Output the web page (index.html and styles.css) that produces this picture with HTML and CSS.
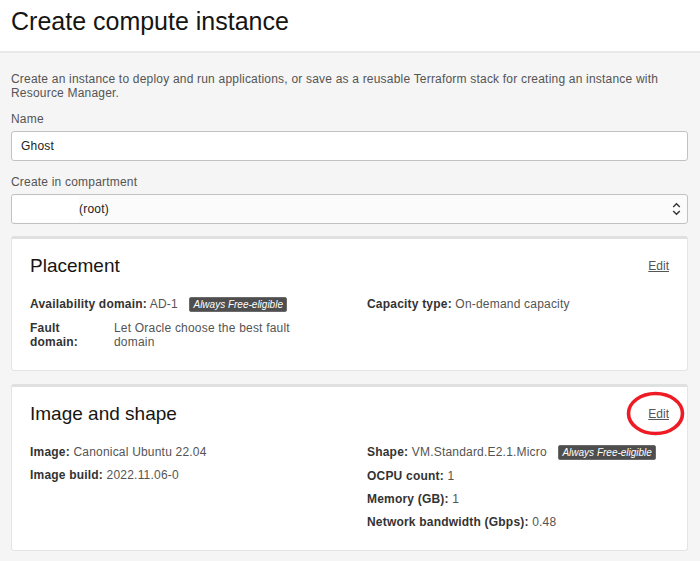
FILE: index.html
```html
<!DOCTYPE html>
<html lang="en">
<head>
<meta charset="utf-8">
<title>Create compute instance</title>
<link rel="stylesheet" href="styles.css">
</head>
<body>
<header class="page-header">
  <h1 class="page-title">Create compute instance</h1>
</header>
<main class="page-body">
  <p class="intro">Create an instance to deploy and run applications, or save as a reusable Terraform stack for creating an instance with Resource Manager.</p>

  <div class="field">
    <label class="field-label">Name</label>
    <div class="text-input">Ghost</div>
  </div>

  <div class="field last">
    <label class="field-label">Create in compartment</label>
    <div class="select-input">
      <span class="select-value"><span class="redacted"></span>(root)</span>
      <svg class="select-arrows" width="9" height="14" viewBox="0 0 9 14" aria-hidden="true">
        <polyline points="1.2,5 4.5,1.7 7.8,5" fill="none" stroke="#333" stroke-width="1.4"/>
        <polyline points="1.2,9 4.5,12.3 7.8,9" fill="none" stroke="#333" stroke-width="1.4"/>
      </svg>
    </div>
  </div>

  <section class="card">
    <div class="card-head">
      <h2 class="card-title">Placement</h2>
      <a class="edit-link">Edit</a>
    </div>
    <div class="card-grid">
      <div class="col">
        <div class="row"><b class="k">Availability domain:</b> AD-1 <span class="badge">Always Free-eligible</span></div>
        <div class="row pair">
          <b class="k pair-key">Fault domain:</b>
          <span class="pair-val">Let Oracle choose the best fault domain</span>
        </div>
      </div>
      <div class="col">
        <div class="row"><b class="k">Capacity type:</b> On-demand capacity</div>
      </div>
    </div>
  </section>

  <section class="card annotated">
    <div class="card-head">
      <h2 class="card-title">Image and shape</h2>
      <a class="edit-link">Edit</a>
    </div>
    <div class="card-grid">
      <div class="col">
        <div class="row"><b class="k">Image:</b> Canonical Ubuntu 22.04</div>
        <div class="row"><b class="k">Image build:</b> 2022.11.06-0</div>
      </div>
      <div class="col">
        <div class="row"><b class="k">Shape:</b> VM.Standard.E2.1.Micro <span class="badge">Always Free-eligible</span></div>
        <div class="row"><b class="k">OCPU count:</b> 1</div>
        <div class="row"><b class="k">Memory (GB):</b> 1</div>
        <div class="row"><b class="k">Network bandwidth (Gbps):</b> 0.48</div>
      </div>
    </div>
    <svg class="circle-mark" width="60" height="46" viewBox="0 0 60 46" aria-hidden="true">
      <ellipse cx="29.5" cy="22.5" rx="27" ry="20" fill="none" stroke="#ed1c24" stroke-width="3.6"/>
    </svg>
  </section>
</main>
</body>
</html>
```

FILE: styles.css
```css
html, body {
  margin: 0;
  padding: 0;
}
body {
  background: #f5f5f5;
  font-family: "Liberation Sans", Arial, sans-serif;
  font-size: 12px;
  line-height: 14px;
  letter-spacing: 0.2px;
  color: #545454;
}
.page-header {
  background: #ffffff;
  height: 53px;
  box-sizing: border-box;
  padding: 6px 11px 0;
  border-bottom: 2px solid #e9e9e9;
}
.page-title {
  margin: 0;
  font-size: 25px;
  line-height: 30px;
  font-weight: normal;
  letter-spacing: 0;
  color: #161513;
}
.page-body {
  padding: 19px 12px 30px 11px;
}
.intro {
  margin: 0 0 12px;
}
.field {
  display: flex;
  flex-direction: column;
  margin-bottom: 14px;
}
.field.last {
  margin-bottom: 12px;
}
.field-label {
  margin-bottom: 5px;
}
.text-input,
.select-input {
  box-sizing: border-box;
  height: 30px;
  border: 1px solid #c2c2c2;
  border-radius: 3px;
  background: #ffffff;
  color: #222;
  display: flex;
  align-items: center;
}
.text-input {
  padding-left: 9px;
}
.select-input {
  background: #fbfbfb;
  justify-content: space-between;
  padding: 0 6px 0 0;
}
.select-value {
  display: flex;
  align-items: center;
  height: 100%;
}
.redacted {
  display: inline-block;
  width: 67px;
  height: 26px;
  background: #ffffff;
}
.select-arrows {
  display: block;
}
.card {
  position: relative;
  background: #ffffff;
  border: 1px solid #e4e4e4;
  border-top: 3px solid #e0e0e0;
  border-radius: 3px;
  padding: 16px 18px 21px 18px;
  margin-bottom: 13px;
}
.card-head {
  display: flex;
  justify-content: space-between;
  align-items: center;
  margin-bottom: 20px;
}
.card-title {
  margin: 0;
  font-size: 19px;
  line-height: 22px;
  font-weight: normal;
  letter-spacing: 0;
  color: #161513;
}
.edit-link {
  color: #555;
  text-decoration: underline;
  letter-spacing: 0;
  cursor: pointer;
}
.card-grid {
  display: grid;
  grid-template-columns: 337px 1fr;
}
.col {
  display: flex;
  flex-direction: column;
  gap: 9px;
}
.row {
  white-space: nowrap;
}
.k {
  color: #333;
  font-weight: bold;
}
.badge {
  display: inline-block;
  margin-left: 8px;
  padding: 0 3px;
  height: 13px;
  line-height: 13px;
  font-size: 10px;
  font-style: italic;
  letter-spacing: 0;
  color: #ffffff;
  background: #4e4e4e;
  border: 1px solid #6a6a6a;
  border-radius: 2px;
  vertical-align: 0px;
}
.pair {
  display: grid;
  grid-template-columns: 72px 190px;
  column-gap: 12px;
  white-space: normal;
}
.circle-mark {
  position: absolute;
  left: 614px;
  top: 4px;
}
```
